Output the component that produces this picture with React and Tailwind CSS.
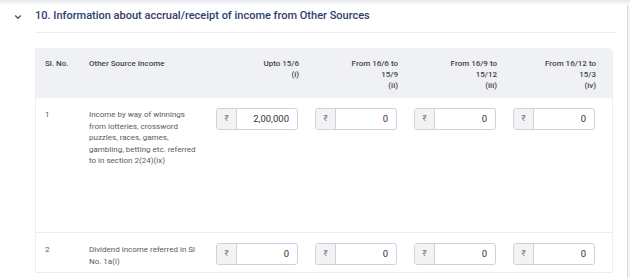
import React from 'react';

const COLUMNS = [
  { lines: ['Upto 15/6', '(i)'] },
  { lines: ['From 16/6 to', '15/9', '(ii)'] },
  { lines: ['From 16/9 to', '15/12', '(iii)'] },
  { lines: ['From 16/12 to', '15/3', '(iv)'] },
  { lines: [] },
];

const ROWS = [
  {
    no: '1',
    label:
      'Income by way of winnings from lotteries, crossword puzzles, races, games, gambling, betting etc. referred to in section 2(24)(ix)',
    values: ['2,00,000', '0', '0', '0', null],
    height: 'h-[135px]',
  },
  {
    no: '2',
    label: 'Dividend income referred in Sl No. 1a(i)',
    values: ['0', '0', '0', '0', null],
    height: 'h-[40px]',
  },
];

const GRID = 'grid grid-cols-[53px_117px_99px_99px_99px_99px_99px]';

// value === null renders the clipped next column's input, no text
function AmountInput({ value }) {
  return (
    <div className="flex h-[22px] w-[82px] overflow-hidden rounded-[3px] border border-[#cfd3d9] bg-white">
      <div className="flex w-[20px] shrink-0 items-center justify-center border-r border-[#cfd3d9] bg-[#f2f3f5] text-[8px] text-[#777]">
        {value !== null && '₹'}
      </div>
      <div className="flex flex-1 items-center justify-end pr-[8px] text-[9.5px] text-[#333]">{value}</div>
    </div>
  );
}

export default function App() {
  return (
    <div
      className="relative flex h-[278px] w-[630px] overflow-hidden bg-white"
      style={{ fontFamily: 'Roboto, "Liberation Sans", sans-serif' }}
    >
      <div className="pointer-events-none absolute inset-x-0 top-0 h-[5px] bg-gradient-to-b from-[#e6e7ea] to-white" />

      <div className="w-[627px] shrink-0">
        <div className="flex h-[32px] items-center pl-[14px] pt-[1px]">
          <svg width="8" height="6" viewBox="0 0 8 6" className="mr-[13px]" aria-hidden>
            <path d="M1.2 1.5 L4 4.3 L6.8 1.5" fill="none" stroke="#4b5563" strokeWidth="1.3" />
          </svg>
          <h2 className="text-[11px] font-medium text-[#2f3d6e]">
            10. Information about accrual/receipt of income from Other Sources
          </h2>
        </div>

        <div className="ml-[35px] mr-[10px] border-b border-[#eceef1]" />

        <div className="ml-[35px] mt-[15px] w-[578px] overflow-hidden rounded-tr-[6px] border-l border-r border-[#eceef1]">
          <div className={`${GRID} h-[50px] bg-[#eff1f5] pt-[10px] text-[8px] font-medium leading-[11px] text-[#444]`}>
            <div className="pl-[9px]">Sl. No.</div>
            <div>Other Source Income</div>
            {COLUMNS.map((col, i) => (
              <div key={i} className="pr-[6px] text-right">
                {col.lines.map((line) => (
                  <div key={line}>{line}</div>
                ))}
              </div>
            ))}
          </div>

          {ROWS.map((row) => (
            <div key={row.no} className={`${GRID} ${row.height} border-b border-[#eceef1] pt-[10px]`}>
              <div className="pl-[9px] pt-[1px] text-[8px] leading-[11.5px] text-[#5a5a5a]">{row.no}</div>
              <div className="pr-[10px] pt-[1px] text-[8px] leading-[11.5px] text-[#5a5a5a]">{row.label}</div>
              {row.values.map((v, i) => (
                <div key={i} className="pl-[10px]">
                  <AmountInput value={v} />
                </div>
              ))}
            </div>
          ))}
        </div>
      </div>

      <div className="h-full w-[3px] border-l border-[#d9dbe0] bg-[#f5f5f7]" />
    </div>
  );
}
